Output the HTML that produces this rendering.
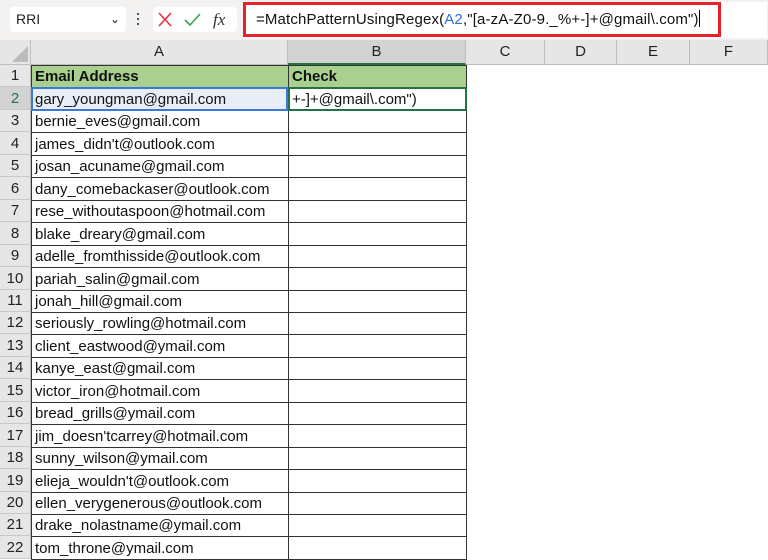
<!DOCTYPE html><html><head><style>
body{margin:0;width:768px;height:559px;overflow:hidden;background:#fff;font-family:"Liberation Sans",Arial,sans-serif;position:relative}
.top{position:absolute;left:0;top:0;width:768px;height:40px;background:#f3f2f1}
.nb{position:absolute;left:10px;top:7px;width:116px;height:25px;background:#fff;border-radius:4px;font-size:14px;line-height:25px;padding-left:6px;box-sizing:border-box;color:#222}
.ic{position:absolute;left:153px;top:7px;width:84px;height:25px;background:#fff;border-radius:4px}
.fb{position:absolute;left:243px;top:2px;width:524px;height:36px;background:#fff}
.red{position:absolute;left:243px;top:2px;width:478px;height:35px;border:3px solid #e8202a;box-sizing:border-box}
.ft{position:absolute;left:256px;top:10px;font-size:15px;color:#111;white-space:nowrap;letter-spacing:0.15px}
.hdr{position:absolute;top:40px;height:25px;background:#e6e6e6;border-right:1px solid #bdbdbd;border-bottom:1px solid #bdbdbd;box-sizing:border-box;font-size:15px;text-align:center;line-height:24px;color:#222}
.rh{position:absolute;left:0;width:31px;background:#e6e6e6;border-right:1px solid #bdbdbd;border-bottom:1px solid #c8c8c8;box-sizing:border-box;font-size:15px;text-align:center;color:#222}
.c{position:absolute;box-sizing:border-box;font-size:15px;padding-left:3px;white-space:nowrap;overflow:hidden;color:#111}
</style></head><body>
<div class="top"></div>
<div class="nb">RRI<span style="position:absolute;right:6px;top:0;font-size:12px">&#8964;</span></div>
<div style="position:absolute;left:137px;top:13px;width:2px;height:2px;background:#555;box-shadow:0 5px #555,0 10px #555"></div>
<div class="ic">
<svg width="84" height="25"><path d="M6 6l12 13M18 6L6 19" stroke="#e8303a" stroke-width="1.6" fill="none"/><path d="M32 13l5 5 10-11" stroke="#3aa04a" stroke-width="1.6" fill="none"/>
<text x="60" y="18" font-family="Liberation Serif" font-style="italic" font-size="17" fill="#333">fx</text></svg></div>
<div class="fb"></div><div class="red"></div>
<div class="ft">=MatchPatternUsingRegex(<span style="color:#2f6fc9">A2</span>,"[a-zA-Z0-9._%+-]+@gmail\.com")<span style="display:inline-block;width:1px;height:17px;background:#000;vertical-align:-3px"></span></div>
<div class="hdr" style="left:0;width:31px"><svg width="31" height="24"><path d="M28 6L28 22 12 22Z" fill="#bbb"/></svg></div>
<div class="hdr" style="left:31px;width:257px">A</div>
<div class="hdr" style="left:288px;width:178px;background:#d2d2d2;border-bottom:2px solid #217346">B</div>
<div class="hdr" style="left:466px;width:79px">C</div>
<div class="hdr" style="left:545px;width:72px">D</div>
<div class="hdr" style="left:617px;width:73px">E</div>
<div class="hdr" style="left:690px;width:78px">F</div>
<div id="g"></div>
<script>
var e=["Email Address","gary_youngman@gmail.com","bernie_eves@gmail.com","james_didn't@outlook.com","josan_acuname@gmail.com","dany_comebackaser@outlook.com","rese_withoutaspoon@hotmail.com","blake_dreary@gmail.com","adelle_fromthisside@outlook.com","pariah_salin@gmail.com","jonah_hill@gmail.com","seriously_rowling@hotmail.com","client_eastwood@ymail.com","kanye_east@gmail.com","victor_iron@hotmail.com","bread_grills@ymail.com","jim_doesn'tcarrey@hotmail.com","sunny_wilson@ymail.com","elieja_wouldn't@outlook.com","ellen_verygenerous@outlook.com","drake_nolastname@ymail.com","tom_throne@ymail.com"];
var h="";
for(var i=0;i<22;i++){var t=Math.round(65+i*22.45),H=Math.round(65+(i+1)*22.45)-t;
var rb=i==1?"background:#d2d2d2;color:#217346;":"";
h+='<div class="rh" style="top:'+t+'px;height:'+H+'px;line-height:'+H+'px;'+rb+'">'+(i+1)+'</div>';
var bg=i==0?"background:#a9d08e;font-weight:bold;":(i==1?"background:#e8eef8;":"");
h+='<div class="c" style="left:31px;top:'+t+'px;width:258px;height:'+(H+1)+'px;line-height:'+H+'px;border:1px solid #333;'+bg+'">'+e[i]+'</div>';
var b2=i==0?"background:#a9d08e;font-weight:bold;":"";
h+='<div class="c" style="left:288px;top:'+t+'px;width:179px;height:'+(H+1)+'px;line-height:'+H+'px;border:1px solid #333;'+b2+'">'+(i==0?"Check":(i==1?"+-]+@gmail\\.com\")":""))+'</div>';}
document.getElementById("g").innerHTML=h;
</script>
<div style="position:absolute;left:31px;top:87px;width:257px;height:24px;border:2px solid #3c78d8;box-sizing:border-box"></div>
<div style="position:absolute;left:288px;top:87px;width:179px;height:24px;border:2px solid #217346;box-sizing:border-box"></div>
</body></html>
